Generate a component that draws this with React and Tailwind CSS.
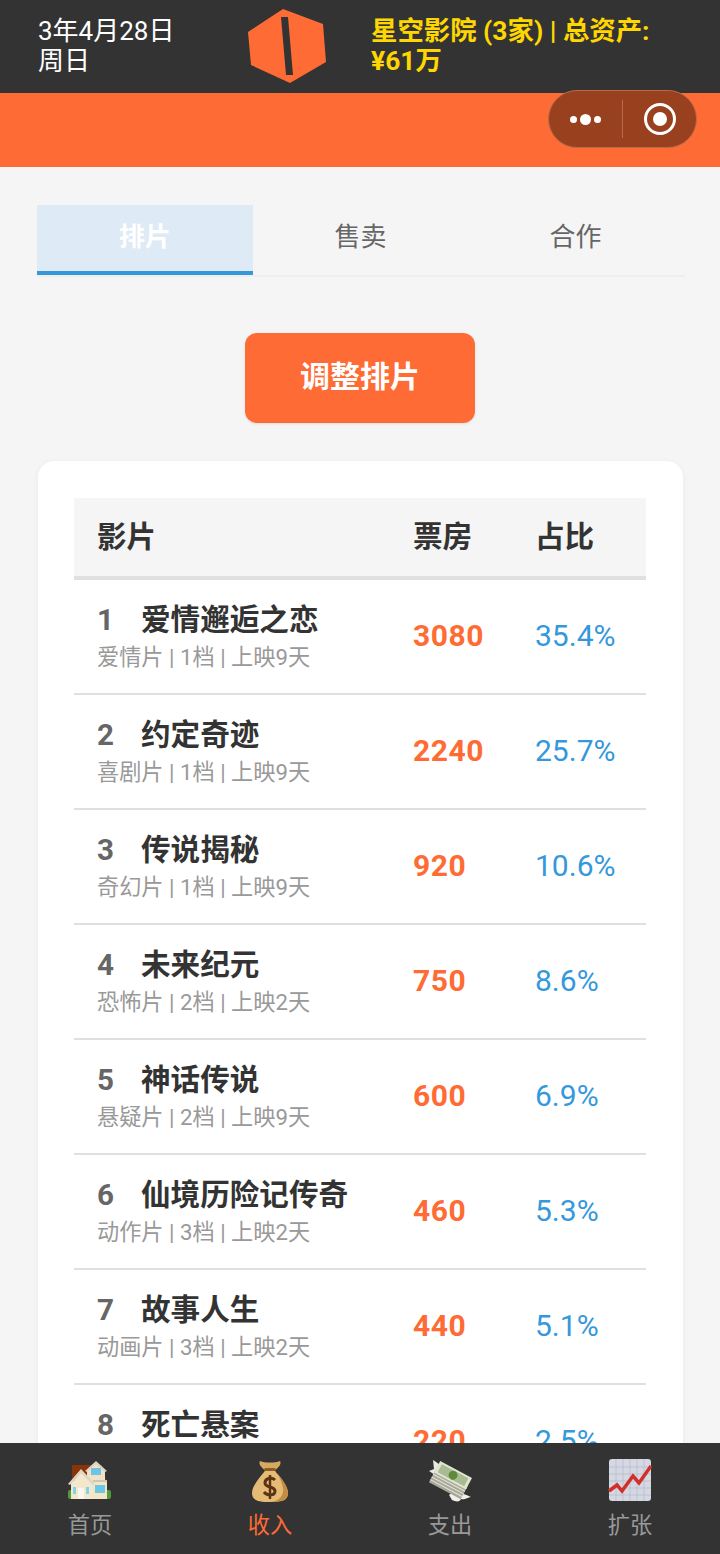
import React from "react";

const FONT = "font-['Roboto','Noto_Sans_CJK_SC',sans-serif]";

const films = [
  { n: 1, name: "爱情邂逅之恋", info: "爱情片 | 1档 | 上映9天", box: "3080", pct: "35.4%" },
  { n: 2, name: "约定奇迹", info: "喜剧片 | 1档 | 上映9天", box: "2240", pct: "25.7%" },
  { n: 3, name: "传说揭秘", info: "奇幻片 | 1档 | 上映9天", box: "920", pct: "10.6%" },
  { n: 4, name: "未来纪元", info: "恐怖片 | 2档 | 上映2天", box: "750", pct: "8.6%" },
  { n: 5, name: "神话传说", info: "悬疑片 | 2档 | 上映9天", box: "600", pct: "6.9%" },
  { n: 6, name: "仙境历险记传奇", info: "动作片 | 3档 | 上映2天", box: "460", pct: "5.3%" },
  { n: 7, name: "故事人生", info: "动画片 | 3档 | 上映2天", box: "440", pct: "5.1%" },
  { n: 8, name: "死亡悬案", info: "犯罪片 | 3档 | 上映2天", box: "220", pct: "2.5%" },
];

function Logo() {
  return (
    <svg width="78" height="75" viewBox="0 0 78 75">
      <polygon points="35,0 75,15 78,53 42,74 3,56 0,23" fill="#ff6b35" />
      <polygon points="33,8 40,8 45,66 38,66" fill="#333333" />
    </svg>
  );
}

function HouseIcon() {
  return (
    <svg width="44" height="44" viewBox="0 0 44 44">
      <rect x="0" y="31" width="43" height="9" rx="2" fill="#4f9a3a" />
      <path d="M4 6 H34 L39 24 V36 H4 Z" fill="#8a3208" />
      <path d="M19 11 L28 3 L37 11 V22 H19 Z" fill="#efe2c6" />
      <path d="M17 12 L28 2 L39 12 L37 13 L28 5 L19 13 Z" fill="#d9d4c8" />
      <rect x="23" y="9" width="10" height="7" fill="#6fc3e4" />
      <rect x="3" y="22" width="36" height="18" fill="#f2e6c8" />
      <path d="M4 24 L13 13 L25 24 V40 H4 Z" fill="#f4e8cc" />
      <path d="M0 25 L13 10 L27 25 L25 26 L13 14 L2 26 Z" fill="#dcd6c8" />
      <rect x="25" y="21" width="14" height="2" fill="#cfc7b4" />
      <rect x="27" y="26" width="10" height="8" fill="#6cc6e6" />
      <rect x="10" y="29" width="6" height="11" fill="#f9f6ee" />
      <rect x="5" y="28" width="3" height="7" fill="#86d0ea" />
      <rect x="18" y="28" width="3" height="7" fill="#86d0ea" />
    </svg>
  );
}

function BagIcon() {
  return (
    <svg width="40" height="44" viewBox="0 0 40 44">
      <path d="M10 2 C15 4 25 4 30 2 C32 5 28 9 25 11 H15 C12 9 8 5 10 2 Z" fill="#d8a860" />
      <rect x="14" y="9" width="12" height="4" rx="2" fill="#8b5a28" />
      <path d="M15 12 H25 C30 18 38 27 38 34 C38 41 33 43 20 43 C7 43 2 41 2 34 C2 27 10 18 15 12 Z" fill="#e6bb76" />
      <path d="M27 14 C32 20 38 27 38 34 C38 41 33 43 20 43 C30 42 34 36 33 29 C32 24 30 19 27 14 Z" fill="#c48c42" />
      <path d="M25 21 C22 18 15 19 15 24 C15 29 25 27 25 32 C25 37 17 37 14 33" stroke="#5b3413" strokeWidth="3" fill="none" />
      <path d="M20 16 V40" stroke="#5b3413" strokeWidth="2.5" />
    </svg>
  );
}

function MoneyIcon() {
  return (
    <svg width="44" height="44" viewBox="0 0 44 44">
      <path d="M5 1 C11 5 19 10 22 17 L12 21 L3 19 L7 16 L1 12 L6 10 Z" fill="#e9e9e2" />
      <path d="M25 33 C31 33 37 35 43 38 C38 39 37 41 33 40 C32 43 28 43 24 41 L21 36 Z" fill="#f1f1ea" />
      <g transform="rotate(28 22 22)">
        <rect x="4" y="18" width="36" height="15" fill="#a9a99a" />
        <path d="M4 21H40M4 24H40M4 27H40M4 30H40" stroke="#e3e3d8" strokeWidth="1" />
        <rect x="4" y="9" width="36" height="13" fill="#dfe6cf" />
        <rect x="7" y="11" width="30" height="9" fill="#a9bb92" />
        <circle cx="22" cy="15.5" r="4.5" fill="#5f8a3e" />
      </g>
    </svg>
  );
}

function ChartIcon() {
  return (
    <svg width="44" height="44" viewBox="0 0 44 44">
      <rect x="1" y="0" width="42" height="42" rx="3" fill="#d5d8e2" />
      <path d="M1 8H43M1 15H43M1 22H43M1 29H43M1 36H43M8 0V42M15 0V42M22 0V42M29 0V42M36 0V42" stroke="#b5b9c8" strokeWidth="0.7" />
      <path d="M1 32 L9 26 L14 32 L25 17 L31 24 L43 7" stroke="#d22f2a" strokeWidth="3.5" fill="none" />
    </svg>
  );
}

const tabs = [
  { icon: <HouseIcon />, label: "首页" },
  { icon: <BagIcon />, label: "收入", active: true },
  { icon: <MoneyIcon />, label: "支出" },
  { icon: <ChartIcon />, label: "扩张" },
];

export default function App() {
  return (
    <div className={`${FONT} relative h-[1554px] w-[720px] overflow-hidden bg-[#f5f5f5]`}>
      {/* HEADER */}
      <div className="flex h-[93px] items-center bg-[#333333] pl-[38px]">
        <div className="w-[210px] -translate-y-px text-[26px] leading-[30px] text-white">
          3年4月28日
          <br />
          周日
        </div>
        <Logo />
        <div className="ml-[45px] w-[300px] -translate-y-px text-[26.4px] font-bold leading-[30px] text-[#ffd700]">
          星空影院 (3家) | 总资产:
          <br />
          ¥61万
        </div>
      </div>

      <div className="h-[74px] bg-[#ff6b35]" />

      {/* CAPSULE */}
      <div className="absolute left-[548px] top-[90px] flex h-[58px] w-[149px] items-center rounded-full border border-[#b96a4b] bg-[#99401f]">
        <div className="flex w-[73px] items-center justify-center gap-[3px]">
          <span className="h-[7px] w-[7px] rounded-full bg-white" />
          <span className="h-[11px] w-[11px] rounded-full bg-white" />
          <span className="h-[7px] w-[7px] rounded-full bg-white" />
        </div>
        <div className="h-[38px] w-px bg-[#b96a4b]" />
        <div className="flex flex-1 items-center justify-center">
          <div className="flex h-[32px] w-[32px] items-center justify-center rounded-full border-[3px] border-white">
            <span className="h-[14px] w-[14px] rounded-full bg-white" />
          </div>
        </div>
      </div>

      {/* TABS */}
      <div className="ml-[37px] mt-[38px] flex h-[72px] w-[648px] border-b-2 border-[#eeeeee] text-[26px] leading-none">
        <div className="flex h-[70px] w-[216px] shrink-0 items-center justify-center border-b-[4px] border-[#3498db] bg-[#deeaf5] pb-[2px] font-bold text-white">
          排片
        </div>
        <div className="flex h-[64px] w-[215px] shrink-0 items-center justify-center text-[#666666]">售卖</div>
        <div className="flex h-[64px] w-[215px] shrink-0 items-center justify-center text-[#666666]">合作</div>
      </div>

      <div className="mt-[56px] flex justify-center">
        <button className="h-[90px] w-[230px] rounded-[12px] bg-[#ff6b35] pb-[3px] text-[30px] font-bold text-white shadow-[0_1px_3px_rgba(0,0,0,0.1)]">
          调整排片
        </button>
      </div>

      {/* CARD */}
      <div className="ml-[38px] mt-[38px] w-[645px] rounded-[16px] bg-white py-[37px] pl-[36px] pr-[37px] shadow-[0_1px_6px_rgba(0,0,0,0.05)]">
        <div className="flex h-[82px] items-center border-b-4 border-[#e0e0e0] bg-[#f5f5f5] pl-[23px] text-[29.6px] font-bold text-[#333333]">
          <div className="w-[316px]">影片</div>
          <div className="w-[122px]">票房</div>
          <div>占比</div>
        </div>

        {films.map((film) => (
          <div key={film.n} className="flex h-[115px] items-center border-b-2 border-[#e0e0e0] pl-[23px]">
            <div className="w-[316px]">
              <div className="flex h-[40px] items-center text-[29.6px] font-bold leading-none text-[#333333]">
                <span className="w-[44px] text-[#666666]">{film.n}</span>
                {film.name}
              </div>
              <div className="mt-[1px] text-[22.2px] leading-[30px] text-[#999999]">{film.info}</div>
            </div>
            <div className="w-[122px] -translate-y-px text-[30px] font-bold tracking-[0.5px] text-[#ff6b35]">{film.box}</div>
            <div className="-translate-y-px text-[30px] text-[#3498db]">{film.pct}</div>
          </div>
        ))}
      </div>

      {/* BOTTOM NAV */}
      <div className="absolute inset-x-0 bottom-0 flex h-[111px] bg-[#333333]">
        {tabs.map((tab) => (
          <div key={tab.label} className="flex w-[180px] flex-col items-center pt-[16px]">
            <div className="flex h-[44px] items-center justify-center">{tab.icon}</div>
            <div className={`mt-[6px] text-[22.2px] leading-[32px] ${tab.active ? "text-[#ff6b35]" : "text-[#999999]"}`}>
              {tab.label}
            </div>
          </div>
        ))}
      </div>
    </div>
  );
}
